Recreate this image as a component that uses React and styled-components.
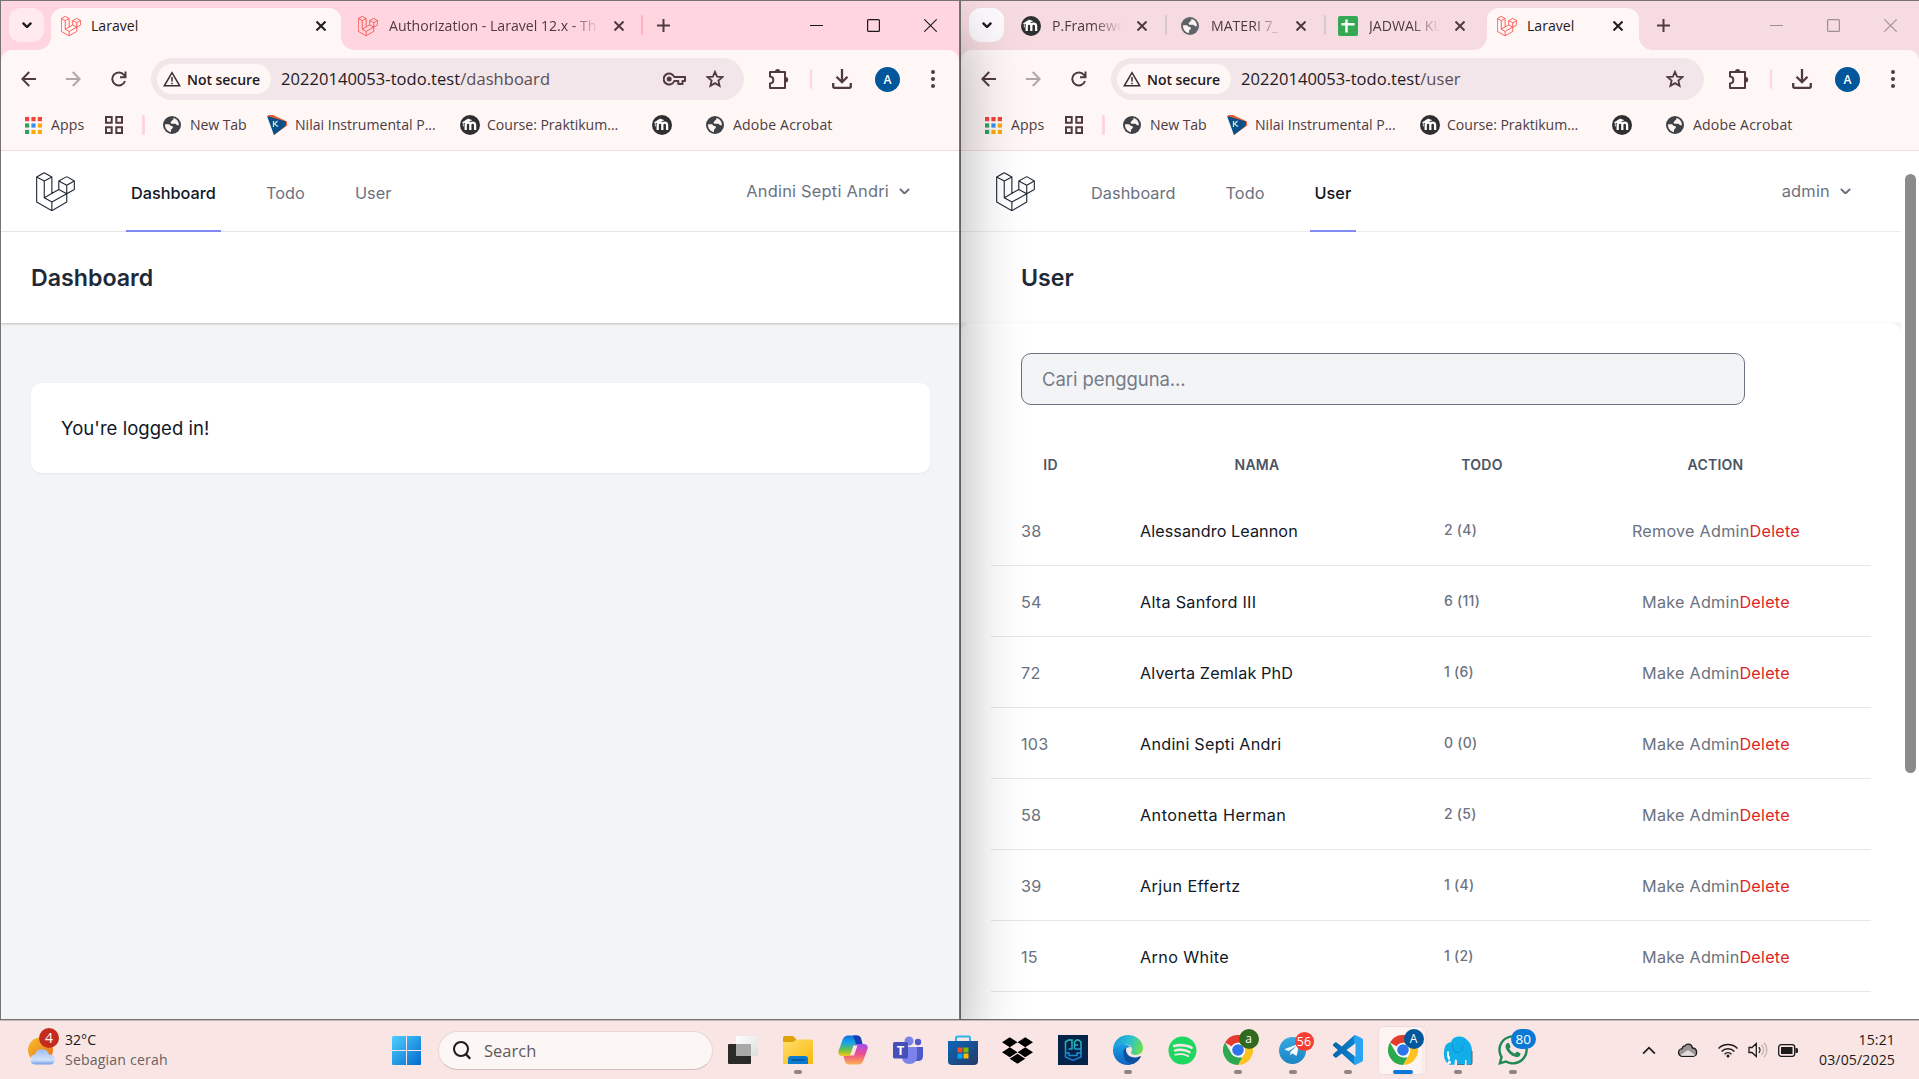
import React from "react";
import styled, { createGlobalStyle, css } from "styled-components";
import { FaDropbox, FaSpotify, FaWhatsapp, FaTelegramPlane } from "react-icons/fa";

const ui = `"Open Sans", "Noto Sans", sans-serif`;
const web = `Inter, "Noto Sans", sans-serif`;

const GlobalStyle = createGlobalStyle`
  *, *::before, *::after { box-sizing: border-box; }
  body { margin: 0; overflow: hidden; font-family: ${ui}; }
  svg { display: block; flex: none; }
`;

/* ---------- desktop ---------- */

const Desktop = styled.div`
  width: 1919px;
  height: 1079px;
  display: flex;
  flex-direction: column;
  overflow: hidden;
  background: #f9e6e4;
`;

const Windows = styled.div`
  display: flex;
  height: 1020px;
  flex: none;
  overflow: hidden;
`;

const Window = styled.section`
  position: relative;
  z-index: ${(p) => (p.$front ? 2 : 1)};
  flex: none;
  width: 960px;
  height: 1020px;
  display: flex;
  flex-direction: column;
  border: 1px solid #757374;
  background: ${(p) => (p.$front ? "#ffd6df" : "#f6dbe0")};
  box-shadow: ${(p) => (p.$front ? "0 34px 60px rgba(0, 0, 0, 0.34)" : "none")};
`;

/* ---------- tab strip ---------- */

const TabStrip = styled.div`
  display: flex;
  align-items: flex-end;
  height: 49px;
  flex: none;
  padding-left: 8px;
`;

const TabSearch = styled.div`
  width: 35px;
  height: 34px;
  margin: 0 7px 8px 0;
  border-radius: 12px;
  display: grid;
  place-items: center;
  background: ${(p) => (p.$front ? "#ffebef" : "#fdfafd")};
`;

const TabBox = styled.div`
  position: relative;
  width: ${(p) => p.$w}px;
  height: 42px;
  flex: none;
  display: flex;
  align-items: center;
  gap: ${(p) => (p.$active ? 10 : 11)}px;
  padding: 0 ${(p) => p.$pr}px 7px ${(p) => p.$pl}px;
  color: #4f3a40;
  ${(p) =>
    p.$active &&
    css`
      background: #fff7f6;
      color: #1f1a1b;
      border-radius: 12px 12px 0 0;
      &::before,
      &::after {
        content: "";
        position: absolute;
        bottom: 0;
        width: 13px;
        height: 13px;
      }
      &::before {
        left: -13px;
        background: radial-gradient(circle at 0 0, transparent 12.5px, #fff7f6 13px);
      }
      &::after {
        right: -13px;
        background: radial-gradient(circle at 100% 0, transparent 12.5px, #fff7f6 13px);
      }
    `}
`;

const TabTitle = styled.div`
  flex: 1;
  min-width: 0;
  overflow: hidden;
  white-space: nowrap;
  font-size: 14.1px;
  line-height: 20px;
  ${(p) =>
    p.$fade &&
    css`
      margin-right: 4px;
      mask-image: linear-gradient(90deg, #000 calc(100% - 28px), transparent 100%);
    `}
`;

const TabDivider = styled.div`
  width: 2px;
  height: 20px;
  margin-bottom: 15px;
  border-radius: 1px;
  flex: none;
  background: ${(p) => (p.$front ? "#ffb0be" : "#d6c7ca")};
`;

const NewTab = styled.div`
  margin: 0 0 18px ${(p) => p.$ml}px;
`;

const Controls = styled.div`
  display: flex;
  margin: 0 0 0 auto;
  color: ${(p) => (p.$front ? "#1b1618" : "#9d8f92")};
`;

const Control = styled.div`
  width: 57px;
  height: 49px;
  display: grid;
  place-items: center;
`;

/* ---------- toolbar ---------- */

const Chrome = styled.div`
  flex: none;
  height: 101px;
  background: #fff7f6;
  border-radius: 11px 11px 0 0;
  border-bottom: 1px solid #f6dce0;
`;

const Toolbar = styled.div`
  display: flex;
  align-items: center;
  height: 58px;
  padding: 0 24px 0 20px;
`;

const NavIcons = styled.div`
  display: flex;
  gap: 30px;
  margin-right: 24px;
`;

const Omnibox = styled.div`
  width: 593px;
  height: 42px;
  border-radius: 21px;
  background: #f2e6ea;
  display: flex;
  align-items: center;
  padding: 0 20px 0 6px;
`;

const SecurityChip = styled.div`
  width: 114px;
  height: 30px;
  border-radius: 15px;
  background: #fff7f6;
  display: flex;
  align-items: center;
  gap: 6px;
  padding-left: 6px;
  margin-right: 10px;
  font-size: 14px;
  font-weight: 600;
  letter-spacing: -0.05px;
  white-space: nowrap;
  color: #1f1a1b;
`;

const Url = styled.div`
  flex: 1;
  font-size: 16.5px;
  letter-spacing: 0.05px;
  line-height: 24px;
  white-space: nowrap;
  color: #1f1a1b;
  span { color: #5b4d51; }
`;

const OmniIcons = styled.div`
  display: flex;
  align-items: center;
  gap: 20px;
`;

const Actions = styled.div`
  display: flex;
  align-items: center;
  flex: 1;
  margin-left: 24px;
`;

const PinkBar = styled.div`
  width: 2px;
  height: 20px;
  border-radius: 1px;
  background: #ffd6df;
  margin: 0 20px;
`;

const Avatar = styled.div`
  width: 25px;
  height: 25px;
  border-radius: 50%;
  margin: 0 31px 0 23px;
  background: #01579b;
  color: #fff;
  font-size: 12px;
  font-weight: 600;
  line-height: 25px;
  text-align: center;
`;

const Bookmarks = styled.div`
  display: flex;
  align-items: center;
  height: 34px;
  padding-left: 22px;
`;

const Bookmark = styled.div`
  width: ${(p) => (p.$w ? `${p.$w}px` : "auto")};
  flex: none;
  display: flex;
  align-items: center;
  gap: ${(p) => p.$gap || 8}px;
  font-size: 14.1px;
  letter-spacing: ${(p) => p.$ls || 0}px;
  line-height: 20px;
  white-space: nowrap;
  color: #4d3c42;
`;

const IconSlot = styled.span`
  width: 20px;
  height: 20px;
  flex: none;
  display: grid;
  place-items: center;
`;

const BookmarkBar = styled.div`
  width: 3px;
  height: 20px;
  border-radius: 1px;
  background: #ffd6df;
  margin: 0 17px 0 0;
`;

/* ---------- web pages ---------- */

const Page = styled.main`
  flex: 1;
  min-height: 0;
  display: flex;
  overflow: hidden;
  background: #fff;
  font-family: ${web};
`;

const Document = styled.div`
  flex: 1;
  display: flex;
  flex-direction: column;
  background: #f3f4f6;
`;

const Nav = styled.nav`
  height: 81px;
  flex: none;
  display: flex;
  background: #fff;
  border-bottom: 1px solid #ececef;
  padding: 0 ${(p) => p.$pr}px 0 35px;
`;

const LogoBox = styled.div`
  padding-top: 21px;
  width: 90px;
`;

const NavLink = styled.a`
  height: 81px;
  padding: 0 5px;
  margin-right: 40px;
  font-size: 16.3px;
  font-weight: ${(p) => (p.$active ? 450 : 420)};
  letter-spacing: ${(p) => (p.$active ? 0 : 0.06)}px;
  line-height: 84px;
  color: ${(p) => (p.$active ? "#111827" : "#6b7280")};
  border-bottom: 2px solid ${(p) => (p.$active ? "#818cf8" : "transparent")};
`;

const Account = styled.div`
  margin-left: auto;
  display: flex;
  align-items: center;
  gap: 10px;
  height: 80px;
  font-size: 16.4px;
  letter-spacing: 0.22px;
  color: #6b7280;
`;

const PageHeader = styled.header`
  position: relative;
  height: 91px;
  flex: none;
  background: #fff;
  padding-left: ${(p) => p.$pl}px;
  box-shadow: 0 1px 3px rgba(0, 0, 0, 0.13), 0 1px 2px rgba(0, 0, 0, 0.1);
  ${(p) => p.$soft && "box-shadow: none; border-bottom: 1px solid #f9f9fa;"}
  h2 {
    margin: 0;
    font-size: 23.2px;
    font-weight: 580;
    line-height: 92px;
    color: #1f2937;
  }
`;

const Card = styled.div`
  margin: 60px 29px 0 30px;
  height: 90px;
  border-radius: 10px;
  background: #fff;
  box-shadow: 0 1px 2px rgba(0, 0, 0, 0.06);
  padding-left: 30px;
  font-size: 18.5px;
  letter-spacing: 0.04px;
  line-height: 91px;
  color: #111827;
`;

const UserCard = styled.div`
  flex: 1;
  min-height: 0;
  background: #fff;
  border-radius: 10px 10px 0 0;
  padding: 30px 30px 0;
  overflow: hidden;
`;

const SearchField = styled.div`
  margin-left: 30px;
  width: 724px;
  height: 52px;
  border: 1px solid #6b7280;
  border-radius: 10px;
  background: #f3f4f6;
  padding-left: 20px;
  font-size: 18.5px;
  letter-spacing: -0.08px;
  line-height: 51px;
  color: #757b87;
`;

const Grid = styled.div`
  display: grid;
  grid-template-columns: 119px 294px 156px 311px;
  align-items: center;
`;

const HeadRow = styled(Grid)`
  margin-top: 30px;
  height: 60px;
  padding-bottom: 2px;
  font-size: 14px;
  font-weight: 560;
  letter-spacing: 0.25px;
  color: #4b5563;
  text-align: center;
`;

const UserRow = styled(Grid)`
  height: 71px;
  padding-top: 2px;
  border-bottom: 1px solid #e5e7eb;
  font-size: 16.2px;
  color: #6b7280;
`;

const Id = styled.div`
  padding-left: 30px;
  letter-spacing: 0.25px;
`;

const Name = styled.div`
  padding-left: 30px;
  letter-spacing: ${(p) => p.$ls}px;
  color: #111827;
`;

const TodoCount = styled.div`
  padding: 0 0 4px 40px;
  font-size: 14px;
  font-weight: 500;
  letter-spacing: 0.25px;
`;

const RowActions = styled.div`
  padding-left: 1px;
  text-align: center;
  letter-spacing: 0.24px;
  span { color: #dc2626; }
`;

const Scrollbar = styled.div`
  width: 18px;
  flex: none;
  background: #fff;
  padding: 23px 0 0 4px;
  &::after {
    content: "";
    display: block;
    width: 11px;
    height: 599px;
    border-radius: 6px;
    background: #8b8b8b;
  }
`;

/* ---------- taskbar ---------- */

const Taskbar = styled.footer`
  position: relative;
  z-index: 3;
  height: 59px;
  flex: none;
  display: flex;
  border-top: 1px solid #c7b9b8;
  background: #f9e6e4;
  color: #1d1a1a;
`;

const Weather = styled.div`
  width: 392px;
  display: flex;
  padding: 8px 0 0 27px;
`;

const WeatherIcon = styled.div`
  position: relative;
  width: 38px;
  height: 38px;
  padding-top: 8px;
`;

const Bubble = styled.span`
  position: absolute;
  left: ${(p) => p.$x}px;
  top: ${(p) => p.$y}px;
  min-width: ${(p) => p.$s}px;
  height: ${(p) => p.$s}px;
  padding: 0 ${(p) => p.$px || 0}px;
  border-radius: 99px;
  background: ${(p) => p.$bg};
  color: #fff;
  font-size: ${(p) => p.$fs || 13}px;
  line-height: ${(p) => p.$s}px;
  text-align: center;
`;

const WeatherText = styled.div`
  padding-top: 1px;
  font-size: 14.1px;
  line-height: 20px;
  span {
    display: block;
    letter-spacing: 0.17px;
    color: #696162;
  }
`;

const Start = styled.div`
  padding-top: 15px;
  width: 46px;
`;

const SearchPill = styled.div`
  width: 275px;
  height: 39px;
  margin: 10px 2px 0 0;
  border: 1px solid #ead6d5;
  border-bottom-color: #cfbfbe;
  border-radius: 20px;
  background: #fcf6f5;
  display: flex;
  align-items: center;
  gap: 13px;
  padding-left: 14px;
  font-size: 16.5px;
  color: #5f5a5a;
`;

const AppSlot = styled.div`
  position: relative;
  width: 55px;
  height: 58px;
  display: flex;
  flex-direction: column;
  align-items: center;
  padding-top: 14px;
`;

const ActiveTile = styled.div`
  position: absolute;
  left: 3px;
  top: 5px;
  width: 49px;
  height: 49px;
  border-radius: 5px;
  border: 1px solid #eedddc;
  background: #fdf3f2;
  box-shadow: inset -5px 0 0 -1px #f9ebea;
`;

const AppIcon = styled.div`
  position: relative;
  width: 30px;
  height: 30px;
  display: flex;
  align-items: center;
  justify-content: center;
`;

const Running = styled.div`
  position: relative;
  width: ${(p) => (p.$active ? 20 : 8)}px;
  height: 4px;
  margin-top: 5px;
  border-radius: 2px;
  background: ${(p) => (p.$active ? "#0a78d4" : "#8e8483")};
`;

const Tray = styled.div`
  margin-left: auto;
  display: flex;
  align-items: center;
  padding-right: 24px;
`;

const TrayItem = styled.div`
  width: 20px;
  margin-right: ${(p) => p.$mr}px;
  display: grid;
  place-items: center;
`;

const Clock = styled.div`
  width: 97px;
  text-align: right;
  font-size: 14.1px;
  letter-spacing: 0.12px;
  line-height: 20px;
`;

/* ---------- drawings ---------- */

const LaravelMark = ({ size, color, weight }) => (
  <svg width={size} height={size} viewBox="0 0 118 118" fill="none" stroke={color} strokeWidth={weight} strokeLinejoin="round">
    <path d="M25 2 2 15v76l46 26 45-26V40M25 2l23 13-23 12L2 15M25 27v51l23 13v26M48 15v49M93 14 69 27v26l24 13 23-13V27L93 14M69 27l24 13 23-13M25 78l44-25M48 91l45-25" />
  </svg>
);

const RedMark = () => <LaravelMark size={20} color="#fb4a40" weight={5} />;

const Chevron = ({ w = 10, color = "#1f1a1b", sw = 2.4, flip }) => (
  <svg width={w} height={w * 0.6} viewBox="0 0 10 6" fill="none" stroke={color} strokeWidth={sw}>
    <path d={flip ? "M.8 5.400 5 1.200l4.200 4.200" : "M.8.8 5 5 9.200.8"} />
  </svg>
);

const Cross = ({ color = "#4f3a40" }) => (
  <svg width="10" height="10" viewBox="0 0 10 10" stroke={color} strokeWidth="2">
    <path d="M.5.5l9 9M9.500.5l-9 9" />
  </svg>
);

const Plus = () => (
  <svg width="13" height="13" viewBox="0 0 13 13" stroke="#4f3a40" strokeWidth="2">
    <path d="M6.500 0v13M0 6.500h13" />
  </svg>
);

const Globe = ({ color = "#3f4246" }) => (
  <svg width="18" height="18" viewBox="0 0 18 18">
    <circle cx="9" cy="9" r="9" fill={color} />
    <path d="M2 8.200h3.400c1.500 0 1.600 1.700 3 1.700 1.600 0 1.800 1 1.300 2-.4.900-1.700.8-1.700 2v2.200C4.500 15.600 1.800 12.500 2 8.200zM9.700 2c1.100.5.9 1.900-.2 2.200-1.300.3-.7 1.500-1.900 1.700 0 1.300.5 1.900 1.800 1.900h2.800c1.200 0 1.100 1.300 2.100 1.400h1.600C16 5 13 2.200 9.700 2z" fill="#fff3f3" />
  </svg>
);

const Moodle = () => (
  <svg width="20" height="20" viewBox="0 0 20 20">
    <circle cx="10" cy="10" r="10" fill="#2f2f31" />
    <path d="M2.500 7.500 8 4l3.500 1.300L6 7.500zM3.300 7.500v4" fill="#fff" stroke="#fff" strokeWidth=".8" />
    <path d="M5.700 15V10a2.300 2.300 0 0 1 4.600 0v5M10.300 10a2.400 2.400 0 0 1 4.800 0v5" fill="none" stroke="#fff" strokeWidth="2.300" />
  </svg>
);

const Sheets = () => (
  <svg width="20" height="20" viewBox="0 0 20 20">
    <rect width="20" height="20" rx="2" fill="#34a853" />
    <path d="M8.500 3.500v13M3.500 8.300h13" stroke="#fff" strokeWidth="2.400" />
  </svg>
);

const AppsGrid = () => {
  const colors = ["#f44336", "#f44336", "#f44336", "#34a060", "#3a8ff0", "#fbab0c", "#34a060", "#fbab0c", "#fbab0c"];
  return (
    <svg width="17" height="17" viewBox="0 0 17 17">
      {colors.map((c, i) => (
        <rect key={i} x={(i % 3) * 6.4} y={Math.floor(i / 3) * 6.4} width="4.200" height="4.200" fill={c} />
      ))}
    </svg>
  );
};

const FourSquares = () => (
  <svg width="18" height="18" viewBox="0 0 18 18" fill="none" stroke="#4f3a40" strokeWidth="2">
    <path d="M1 1h5.700v5.700H1zM11.300 1H17v5.700h-5.700zM1 11.300h5.700V17H1zM11.300 11.300H17V17h-5.700z" />
  </svg>
);

const NilaiMark = () => (
  <svg width="20" height="20" viewBox="0 0 20 20">
    <path d="M1 0l5 0 14 6.500v4L7 20z" fill="#e8582c" />
    <path d="M0 1 19 6.500 18.500 11 7 20z" fill="#07508a" />
    <path d="M6.500 6v6M10.500 6l-3 3 3.500 2.500" stroke="#c9dcea" strokeWidth="1.300" fill="none" />
  </svg>
);

const Arrow = ({ back }) => (
  <svg width="15" height="16" viewBox="0 0 15 16" fill="none" stroke={back ? "#4f3a40" : "#b3a4a7"} strokeWidth="2">
    <path d={back ? "M15 8H1.500M8.200 1 1.300 8l6.900 7" : "M0 8h13.500M6.800 1l6.900 7-6.900 7"} />
  </svg>
);

const Reload = () => (
  <svg width="16" height="16" viewBox="0 0 16 16" fill="none" stroke="#4f3a40" strokeWidth="2">
    <path d="M14 10A6.500 6.500 0 1 1 13 4L14.500 6M14.500 .6v5.600H9" />
  </svg>
);

const Warning = () => (
  <svg width="18" height="16" viewBox="0 0 18 16" fill="none" stroke="#3a2d31" strokeWidth="1.500">
    <path d="M9 1.700 1.300 14.800h15.400zM9 6v4.500M9 11.700v1.500" />
  </svg>
);

const Key = () => (
  <svg width="23" height="14" viewBox="0 0 23 14" fill="none" stroke="#4f3a40" strokeWidth="2">
    <path d="M11.300 5A5.500 5.500 0 1 0 11.300 9h4v3h4.200V9H22V5z" strokeLinejoin="round" />
    <circle cx="6.200" cy="7" r="1.500" fill="#4f3a40" />
  </svg>
);

const Star = () => (
  <svg width="18" height="18" viewBox="0 0 18 18" fill="none" stroke="#4f3a40" strokeWidth="1.800">
    <path d="M9 1.800l2.100 4.800 5.300.5-4 3.500 1.200 5.200L9 13.100l-4.600 2.700 1.200-5.200-4-3.500 5.300-.5z" />
  </svg>
);

const Puzzle = () => (
  <svg width="22" height="22" viewBox="0 0 22 22" fill="none" stroke="#4f3a40" strokeWidth="2" strokeLinejoin="round">
    <path d="M2 4h15v16H2v-4.500c4.500-.3 4.500-6.700 0-7z" />
    <path d="M7 3.500a2.600 2.600 0 0 1 5.200 0zM17.500 9a2.700 2.700 0 0 1 0 5.400z" fill="#4f3a40" stroke="none" />
  </svg>
);

const Download = () => (
  <svg width="20" height="20" viewBox="0 0 20 20" fill="none" stroke="#4f3a40" strokeWidth="2.300">
    <path d="M10 0v13M4.500 7.700l5.500 5.500 5.500-5.500M1.200 14v3.200q0 1.600 1.600 1.600h14.400q1.600 0 1.600-1.600V14" />
  </svg>
);

const Dots = () => (
  <svg width="4" height="18" viewBox="0 0 4 18" fill="#4f3a40">
    <circle cx="2" cy="2" r="2" />
    <circle cx="2" cy="9" r="2" />
    <circle cx="2" cy="16" r="2" />
  </svg>
);

const WindowButtons = ({ front }) => (
  <Controls $front={front}>
    <Control>
      <svg width="13" height="13" viewBox="0 0 13 13" stroke="currentColor"><path d="M0 6.500h13" /></svg>
    </Control>
    <Control>
      <svg width="13" height="13" viewBox="0 0 13 13" fill="none" stroke="currentColor" strokeWidth="1.200"><rect x=".6" y=".6" width="11.800" height="11.800" rx="1" /></svg>
    </Control>
    <Control>
      <svg width="13" height="13" viewBox="0 0 13 13" stroke="currentColor" strokeWidth="1.100"><path d="M.3.3l12.400 12.400M12.700.3.3 12.700" /></svg>
    </Control>
  </Controls>
);

const WeatherSun = () => (
  <svg width="28" height="28" viewBox="0 0 28 28">
    <defs>
      <linearGradient id="sun" x1="0" y1="0" x2="1" y2="1"><stop stopColor="#f5bf2e" /><stop offset="1" stopColor="#ec6a1c" /></linearGradient>
      <linearGradient id="cloud" x1="0" y1="0" x2="0" y2="1"><stop stopColor="#9fc0f2" /><stop offset=".7" stopColor="#d3e2fa" /><stop offset="1" stopColor="#6f9be8" /></linearGradient>
    </defs>
    <circle cx="13.500" cy="13" r="12.500" fill="url(#sun)" />
    <path d="M8 27.500a5 5 0 0 1-.3-9.900A7.500 7.500 0 0 1 22 17.500h.8a5 5 0 0 1 .3 10z" fill="url(#cloud)" />
  </svg>
);

const WindowsLogo = () => (
  <svg width="29" height="29" viewBox="0 0 29 29">
    <defs>
      <linearGradient id="win" x1="0" y1="0" x2="1" y2="1"><stop stopColor="#4fd0ff" /><stop offset="1" stopColor="#0069cf" /></linearGradient>
    </defs>
    <path d="M1 0h13v14H0V1zM15 0h13q1 0 1 1v13H15zM0 15h14v14H1q-1 0-1-1zM15 15h14v13q0 1-1 1H15z" fill="url(#win)" />
  </svg>
);

const Magnifier = () => (
  <svg width="18" height="19" viewBox="0 0 18 19" fill="none" stroke="#1d1a1a" strokeWidth="2">
    <circle cx="8" cy="8" r="7" />
    <path d="M12.800 13l4.400 4.800" strokeWidth="2.400" />
  </svg>
);

const TaskView = () => (
  <svg width="30" height="30" viewBox="0 0 30 30">
    <defs>
      <linearGradient id="tvw" x1="0" y1="0" x2="1" y2="1"><stop stopColor="#fff" /><stop offset="1" stopColor="#ddd" /></linearGradient>
    </defs>
    <rect x="0" y="9" width="23" height="20" rx="1" fill="#2a2a29" />
    <rect x="8" y="1" width="22" height="20" rx="1" fill="url(#tvw)" />
    <rect x="8" y="9" width="15" height="12" fill="#a8a8a6" />
  </svg>
);

const Explorer = () => (
  <svg width="30" height="30" viewBox="0 0 30 30">
    <defs>
      <linearGradient id="fold" x1="0" y1="0" x2="1" y2="1"><stop stopColor="#ffdd6b" /><stop offset="1" stopColor="#fbb90c" /></linearGradient>
    </defs>
    <path d="M0 3q0-2 2-2h8l3 3v4H0z" fill="#e0a008" />
    <path d="M0 7h10l3-2.500h15q2 0 2 1.500v22q0 1-1 1H1q-1 0-1-1z" fill="url(#fold)" />
    <path d="M5 29v-5q0-3 3-3h14q3 0 3 3v5z" fill="#0c7cd0" />
    <path d="M8.500 25h13" stroke="#064f93" strokeWidth="1.500" />
  </svg>
);

const Copilot = () => (
  <svg width="30" height="30" viewBox="0 0 30 30">
    <defs>
      <linearGradient id="cp1" x1="0" y1="0" x2="0" y2="1"><stop stopColor="#1670e0" /><stop offset=".35" stopColor="#14a5e8" /><stop offset=".7" stopColor="#6cc04a" /><stop offset="1" stopColor="#f6c915" /></linearGradient>
      <linearGradient id="cp2" x1="0" y1="0" x2="0" y2="1"><stop stopColor="#a24cf0" /><stop offset=".5" stopColor="#ee4f8a" /><stop offset="1" stopColor="#ffb052" /></linearGradient>
    </defs>
    <path d="M10 .5h9q3 0 4 3l1.500 5.500H19q-2 0-3 3l-3 9H4.500q-5 0-4-5l4-11q1.500-4.500 5.500-4.500z" fill="url(#cp1)" />
    <path d="M15 .5h4q3 0 4 3l1.500 5.500H18z" fill="#173fb5" />
    <path d="M20 29.500h-9q-3 0-4-3L5.500 21H11q2 0 3-3l3-9h8.500q5 0 4 5l-4 11q-1.500 4.500-5.500 4.500z" fill="url(#cp2)" />
    <path d="M15.500 10.500h4l-3.500 10h-4z" fill="#f9e6e4" />
  </svg>
);

const Teams = () => (
  <svg width="30" height="30" viewBox="0 0 30 30">
    <circle cx="16" cy="6" r="4.500" fill="#7b83eb" />
    <circle cx="25" cy="7" r="3.200" fill="#5059c9" />
    <path d="M19 12h11v9q0 5-5 5h-4z" fill="#5059c9" />
    <path d="M9 12h15v9q0 8-7.500 8T9 21z" fill="#7b83eb" />
    <rect y="7" width="15" height="16.500" rx="1.500" fill="#464eb8" />
    <text x="7.500" y="20" fill="#fff" fontSize="13" fontWeight="700" textAnchor="middle">T</text>
  </svg>
);

const Store = () => (
  <svg width="30" height="31" viewBox="0 0 30 31">
    <defs>
      <linearGradient id="store" x1="0" y1="0" x2="1" y2="1"><stop stopColor="#0b66b8" /><stop offset="1" stopColor="#243a66" /></linearGradient>
    </defs>
    <path d="M8 7V3q0-1.500 1.500-1.500h11Q22 1.500 22 3v4" fill="none" stroke="#2cb5f2" strokeWidth="2" />
    <path d="M0 6h30v20q0 4-4 4H4q-4 0-4-4z" fill="url(#store)" />
    <path d="M9.500 12.500h5v5h-5z" fill="#f25022" />
    <path d="M15.500 12.500h5v5h-5z" fill="#7fba00" />
    <path d="M9.500 18.500h5v5h-5z" fill="#00a4ef" />
    <path d="M15.500 18.500h5v5h-5z" fill="#ffb900" />
  </svg>
);

const PgApp = () => (
  <svg width="30" height="30" viewBox="0 0 30 30" fill="none" strokeWidth="1.500">
    <defs>
      <linearGradient id="pg" x1="0" y1="0" x2="0" y2="1"><stop stopColor="#25c6b6" /><stop offset="1" stopColor="#1d74d8" /></linearGradient>
    </defs>
    <rect width="30" height="30" fill="#03234b" />
    <path d="M7.500 22V7l3-2h3.500v9h-3.500M16.500 14V7l2-2h2l2.500 2v7h-6.500M23 14v8l-8 3.500L7.500 22v-4H11v2.500h8V18h4M17 10h3" stroke="url(#pg)" />
  </svg>
);

const Edge = () => (
  <svg width="30" height="30" viewBox="0 0 30 30">
    <defs>
      <linearGradient id="e1" x1="0" y1=".3" x2="1" y2=".5"><stop stopColor="#1795dd" /><stop offset=".55" stopColor="#2fc2d0" /><stop offset="1" stopColor="#6be04a" /></linearGradient>
      <linearGradient id="e2" x1="0" y1="0" x2="0" y2="1"><stop stopColor="#1aa0e4" /><stop offset="1" stopColor="#0f62c0" /></linearGradient>
    </defs>
    <path d="M0 14C1 5 7.500 0 15 0c9 0 15 6.500 15 13 0 4.500-3.500 7-7.500 7-3 0-4.500-1-4.500-2.200 0-.8 1-1.300 1-3.300 0-3-3.500-5.500-8-5.500C6 9 1.500 11 0 14z" fill="url(#e1)" />
    <path d="M0 14C1.500 10.500 6 9 10 9c3.500 0 6 1.500 7.500 3.500-3-1-6 1.500-6 5.500 0 6 5 9.500 9 10.500C18 30 16 30 15 30 6 30-.5 23 0 14z" fill="url(#e2)" />
    <path d="M13 12.800c-1.800 1.200-2.700 3-2.700 5.700 0 5 4 10.500 10 10.500 3.500-1.700 6-4 7.500-7 .3-.8-.4-1-1-.7-1.600.8-3.300 1.200-5 1.200-5.500 0-9.300-3.500-8.800-9.700z" fill="#0e4fa0" />
  </svg>
);

const ChromeMark = () => (
  <svg width="30" height="30" viewBox="0 0 30 30">
    <path d="M15 15 2 7.500A15 15 0 0 1 28 7.500z" fill="#e33b2e" />
    <path d="M15 7.500h13a15 15 0 0 1-13 22.500l6.500-11.200z" fill="#fcc31e" />
    <path d="M2 7.500 8.500 18.800 15 22.500h4.300L15 30A15 15 0 0 1 2 7.500z" fill="#2da94f" />
    <circle cx="15" cy="15" r="7.300" fill="#fff" />
    <circle cx="15" cy="15" r="5.800" fill="#2f74ea" />
  </svg>
);

const TelegramDisc = styled.div`
  width: 27px;
  height: 27px;
  border-radius: 50%;
  background: linear-gradient(#37a9e0, #1c84c4);
  color: #fff;
  display: grid;
  place-items: center;
  padding-right: 2px;
`;

const Code = () => (
  <svg width="30" height="30" viewBox="0 0 24 24">
    <defs>
      <linearGradient id="code" x1="0" y1="0" x2="1" y2="0"><stop stopColor="#0a67ad" /><stop offset=".68" stopColor="#0b7fcb" /><stop offset=".72" stopColor="#2aa3f2" /></linearGradient>
    </defs>
    <path fill="url(#code)" d="M23.150 2.587L18.210.210a1.494 1.494 0 0 0-1.705.290l-9.460 8.630-4.120-3.128a.999.999 0 0 0-1.276.057L.327 7.261A1 1 0 0 0 .326 8.740L3.899 12 .326 15.260a1 1 0 0 0 .001 1.479L1.650 17.940a.999.999 0 0 0 1.276.057l4.120-3.128 9.460 8.630a1.492 1.492 0 0 0 1.704.290l4.942-2.377A1.500 1.500 0 0 0 24 20.060V3.939a1.500 1.500 0 0 0-.850-1.352zm-5.146 14.861L10.826 12l7.178-5.448v10.896z" />
  </svg>
);

const Elephant = () => (
  <svg width="30" height="30" viewBox="0 0 30 30">
    <path d="M8 7c2-6 11-7 15-3 4 3 6 7 6 12v12q0 1.800-2 1.800h-3.500V25h-1.500v4.800H14V25l-2-.5-.5 5.300H6Q7.500 26 6 21l-1.500-3v5l1.500 3-2 2Q0 23 1 16 1.500 8 8 7z" fill="#12aeea" />
    <path d="M29 16v12q0 2-2.500 2H24M14 29.700h7" stroke="#55606a" strokeWidth="1" fill="none" />
    <path d="M9.500 8.500c-.5 5 1 8.500 4.500 9 4 .5 6-3 5.500-7" stroke="#0a93cc" strokeWidth="1" fill="none" />
    <path d="M5 16.500v4l1.500 3M5 27.500h3" stroke="#fff" strokeWidth="1.800" fill="none" />
  </svg>
);

const CloudIcon = () => (
  <svg width="20" height="14" viewBox="0 0 20 14" stroke="#1d1a1a" strokeWidth="1.300">
    <path d="M4.500 13.300a3.800 3.800 0 0 1-.3-7.600C4.500 3.500 6 2.800 7 2.800 8.500.3 13.500.3 14.500 5a4.200 4.200 0 0 1 .8 8.300z" fill="#9b9494" />
    <path d="M2.500 12 10 7l7.500 5q-1 .7-2 .7H4.500q-1.500 0-2-.7z" fill="#e2dcdc" stroke="none" />
  </svg>
);

const Wifi = () => (
  <svg width="20" height="15" viewBox="0 0 20 15" fill="none" stroke="#1d1a1a" strokeWidth="1.500">
    <path d="M.6 5.500a13.300 13.300 0 0 1 18.800 0M3.600 8.500a9 9 0 0 1 12.800 0M6.500 11.200a5 5 0 0 1 7 0" />
    <circle cx="10" cy="13" r="1.500" fill="#1d1a1a" stroke="none" />
  </svg>
);

const Speaker = () => (
  <svg width="20" height="16" viewBox="0 0 20 16" fill="none" stroke="#1d1a1a" strokeWidth="1.300">
    <path d="M1 5.500h3L8.300 1.500v13L4 10.500H1zM10.800 5.200a4 4 0 0 1 0 5.600" />
    <path d="M13.500 3a7 7 0 0 1 0 10M16 .8a10.500 10.500 0 0 1 0 14.400" stroke="#c4b2b1" />
  </svg>
);

const Battery = () => (
  <svg width="20" height="13" viewBox="0 0 20 13">
    <rect x=".7" y=".7" width="16" height="11.600" rx="2.500" fill="none" stroke="#1d1a1a" strokeWidth="1.300" />
    <rect x="3" y="3" width="11.500" height="7" fill="#1d1a1a" />
    <path d="M17.500 4h1q1.500 0 1.500 1.500v2q0 1.500-1.500 1.500h-1z" fill="#1d1a1a" />
  </svg>
);

/* ---------- browser ---------- */

const Tab = ({ icon, title, w, pl, pr, active, fade }) => (
  <TabBox $w={w} $pl={pl} $pr={pr} $active={active}>
    <IconSlot>{icon}</IconSlot>
    <TabTitle $fade={fade}>{title}</TabTitle>
    <Cross color={active ? "#1f1a1b" : undefined} />
  </TabBox>
);

const Browser = ({ front, tabs, path, showKey, newTabGap, children }) => (
  <Window $front={front}>
    <TabStrip>
      <TabSearch $front={front}><Chevron /></TabSearch>
      {tabs}
      <NewTab $ml={newTabGap}><Plus /></NewTab>
      <WindowButtons front={front} />
    </TabStrip>
    <Chrome>
      <Toolbar>
        <NavIcons><Arrow back /><Arrow /><Reload /></NavIcons>
        <Omnibox>
          <SecurityChip><Warning />Not secure</SecurityChip>
          <Url>20220140053-todo.test<span>{path}</span></Url>
          <OmniIcons>{showKey && <Key />}<Star /></OmniIcons>
        </Omnibox>
        <Actions>
          <Puzzle />
          <PinkBar />
          <Download />
          <Avatar>A</Avatar>
          <Dots />
        </Actions>
      </Toolbar>
      <Bookmarks>
        <Bookmark $w={81} $ls={0.1}><IconSlot><AppsGrid /></IconSlot>Apps</Bookmark>
        <Bookmark $w={38}><IconSlot><FourSquares /></IconSlot></Bookmark>
        <BookmarkBar />
        <Bookmark $w={105} $ls={-0.1}><IconSlot><Globe /></IconSlot>New Tab</Bookmark>
        <Bookmark $w={193}><NilaiMark />Nilai Instrumental P...</Bookmark>
        <Bookmark $w={192} $gap={7} $ls={-0.04}><Moodle />Course: Praktikum...</Bookmark>
        <Bookmark $w={53}><Moodle /></Bookmark>
        <Bookmark $ls={0.15}><IconSlot><Globe /></IconSlot>Adobe Acrobat</Bookmark>
      </Bookmarks>
    </Chrome>
    <Page>{children}</Page>
  </Window>
);

const SiteNav = ({ current, account, pr }) => (
  <Nav $pr={pr}>
    <LogoBox><LaravelMark size={39} color="#1f2937" weight={3.400} /></LogoBox>
    {["Dashboard", "Todo", "User"].map((item) => (
      <NavLink key={item} $active={item === current}>{item}</NavLink>
    ))}
    <Account>{account}<Chevron w={11} color="#6b7280" sw={1.900} /></Account>
  </Nav>
);

const users = [
  { id: 38, name: "Alessandro Leannon", tracking: 0.07, todo: "2 (4)", action: "Remove Admin" },
  { id: 54, name: "Alta Sanford III", tracking: 0.27, todo: "6 (11)", action: "Make Admin" },
  { id: 72, name: "Alverta Zemlak PhD", tracking: 0.14, todo: "1 (6)", action: "Make Admin" },
  { id: 103, name: "Andini Septi Andri", tracking: 0.25, todo: "0 (0)", action: "Make Admin" },
  { id: 58, name: "Antonetta Herman", tracking: 0.45, todo: "2 (5)", action: "Make Admin" },
  { id: 39, name: "Arjun Effertz", tracking: 0.38, todo: "1 (4)", action: "Make Admin" },
  { id: 15, name: "Arno White", tracking: 0.37, todo: "1 (2)", action: "Make Admin" },
];

const TaskbarApp = ({ children, running, active, badge }) => (
  <AppSlot>
    {active && <ActiveTile />}
    <AppIcon>{children}{badge}</AppIcon>
    {(running || active) && <Running $active={active} />}
  </AppSlot>
);

export default function App() {
  return (
    <Desktop>
      <GlobalStyle />
      <Windows>
        <Browser
          front
          showKey
          path="/dashboard"
          newTabGap={14}
          tabs={
            <>
              <Tab active w={290} pl={10} pr={15} icon={<RedMark />} title="Laravel" />
              <Tab fade w={300} pl={17} pr={17} icon={<RedMark />} title="Authorization - Laravel 12.x - Th" />
              <TabDivider $front />
            </>
          }
        >
          <Document>
            <SiteNav current="Dashboard" account="Andini Septi Andri" pr={49} />
            <PageHeader $pl={30}><h2>Dashboard</h2></PageHeader>
            <Card>You're logged in!</Card>
          </Document>
        </Browser>
        <Browser
          path="/user"
          newTabGap={18}
          tabs={
            <>
              <Tab fade w={154} pl={10} pr={18} icon={<Moodle />} title="P.Framewo" />
              <TabDivider />
              <Tab fade w={157} pl={13} pr={18} icon={<Globe color="#5f6368" />} title="MATERI 7_" />
              <TabDivider />
              <Tab fade w={161} pl={12} pr={22} icon={<Sheets />} title="JADWAL KU" />
              <Tab active w={152} pl={10} pr={16} icon={<RedMark />} title="Laravel" />
            </>
          }
        >
          <Document>
            <SiteNav current="User" account="admin" pr={50} />
            <PageHeader $soft $pl={60}><h2>User</h2></PageHeader>
            <UserCard>
              <SearchField>Cari pengguna...</SearchField>
              <HeadRow>
                <div>ID</div><div>NAMA</div><div>TODO</div><div>ACTION</div>
              </HeadRow>
              {users.map((user) => (
                <UserRow key={user.id}>
                  <Id>{user.id}</Id>
                  <Name $ls={user.tracking}>{user.name}</Name>
                  <TodoCount>{user.todo}</TodoCount>
                  <RowActions>{user.action}<span>Delete</span></RowActions>
                </UserRow>
              ))}
            </UserCard>
          </Document>
          <Scrollbar />
        </Browser>
      </Windows>
      <Taskbar>
        <Weather>
          <WeatherIcon>
            <WeatherSun />
            <Bubble $x={12} $y={-1} $s={20} $bg="#c42b1c" $fs={14}>4</Bubble>
          </WeatherIcon>
          <WeatherText>32°C<span>Sebagian cerah</span></WeatherText>
        </Weather>
        <Start><WindowsLogo /></Start>
        <SearchPill><Magnifier />Search</SearchPill>
        <TaskbarApp><TaskView /></TaskbarApp>
        <TaskbarApp running><Explorer /></TaskbarApp>
        <TaskbarApp><Copilot /></TaskbarApp>
        <TaskbarApp><Teams /></TaskbarApp>
        <TaskbarApp><Store /></TaskbarApp>
        <TaskbarApp><FaDropbox size={31} color="#000" /></TaskbarApp>
        <TaskbarApp><PgApp /></TaskbarApp>
        <TaskbarApp running><Edge /></TaskbarApp>
        <TaskbarApp><FaSpotify size={29} color="#1ed760" /></TaskbarApp>
        <TaskbarApp running badge={<Bubble $x={16} $y={-6} $s={20} $bg="#33691e" $fs={12}>a</Bubble>}><ChromeMark /></TaskbarApp>
        <TaskbarApp running badge={<Bubble $x={17} $y={-3} $s={19} $bg="#f43e36" $fs={12.5}>56</Bubble>}><TelegramDisc><FaTelegramPlane size={16} /></TelegramDisc></TaskbarApp>
        <TaskbarApp running><Code /></TaskbarApp>
        <TaskbarApp active badge={<Bubble $x={16} $y={-6} $s={20} $bg="#01579b" $fs={12}>A</Bubble>}><ChromeMark /></TaskbarApp>
        <TaskbarApp running><Elephant /></TaskbarApp>
        <TaskbarApp running badge={<Bubble $x={13} $y={-6} $s={20} $px={5} $bg="#0a78d4" $fs={13.5}>80</Bubble>}><FaWhatsapp size={34} color="#1f8a56" /></TaskbarApp>
        <Tray>
          <TrayItem $mr={19}><Chevron w={14} flip sw={1.300} /></TrayItem>
          <TrayItem $mr={20}><CloudIcon /></TrayItem>
          <TrayItem $mr={10}><Wifi /></TrayItem>
          <TrayItem $mr={10}><Speaker /></TrayItem>
          <TrayItem $mr={0}><Battery /></TrayItem>
          <Clock>15:21<br />03/05/2025</Clock>
        </Tray>
      </Taskbar>
    </Desktop>
  );
}
